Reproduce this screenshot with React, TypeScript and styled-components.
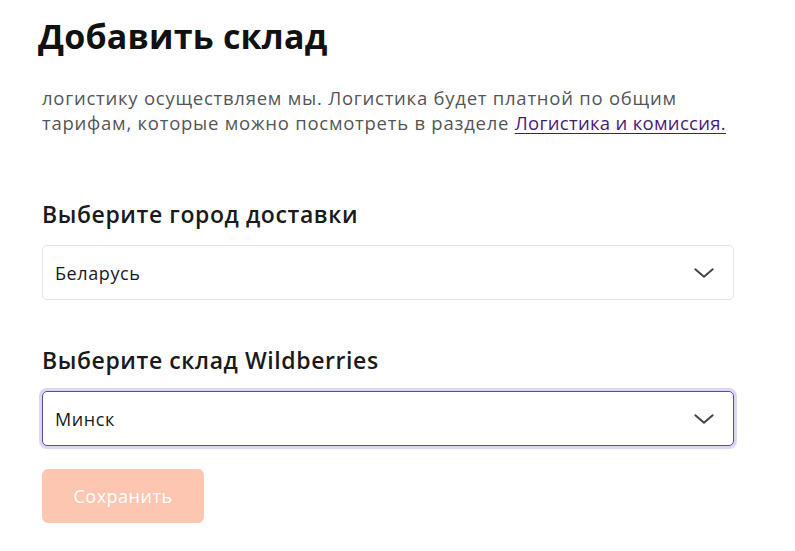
import { createGlobalStyle } from 'styled-components';
import styled from 'styled-components';

const GlobalStyle = createGlobalStyle`
  html, body {
    margin: 0;
    padding: 0;
    background: #ffffff;
  }
  body {
    font-family: 'Open Sans', 'Noto Sans', sans-serif;
    color: #1f1f1f;
  }
`;

const Page = styled.div`
  width: 692px;
  padding: 12px 0 0 42px;
`;

const Title = styled.h1`
  margin: 0 0 0 -4px;
  font-size: 34px;
  line-height: 48px;
  font-weight: 700;
  color: #111111;
  letter-spacing: 0.2px;
`;

const Text = styled.p`
  margin: 25px 0 0;
  font-size: 18.5px;
  line-height: 25px;
  color: #555555;
  letter-spacing: 0.75px;
  white-space: nowrap;
`;

const Link = styled.a`
  color: #481a78;
  letter-spacing: 0.3px;
  text-decoration: underline;
  text-underline-offset: 3px;
`;

const Label = styled.h2<{ $first?: boolean }>`
  margin: ${p => (p.$first ? '64px' : '45px')} 0 0;
  font-size: 23px;
  line-height: 30px;
  font-weight: 600;
  color: #1a1a1a;
  letter-spacing: 0.6px;
`;

const Select = styled.div<{ $active?: boolean }>`
  margin-top: 16px;
  height: 55px;
  box-sizing: border-box;
  display: flex;
  align-items: center;
  justify-content: space-between;
  padding: 0 16px 0 12px;
  border-radius: 5px;
  border: 1px solid ${p => (p.$active ? '#5b4a8c' : '#e4e4e4')};
  box-shadow: ${p => (p.$active ? '0 0 0 3px #ddd5f3' : 'none')};
  font-size: 18px;
  letter-spacing: 0.6px;
  color: #1a1a1a;
`;

const Chevron = styled.svg`
  width: 26px;
  height: 26px;
  color: #444444;
`;

const Button = styled.button`
  margin-top: 23px;
  width: 162px;
  height: 54px;
  border: none;
  border-radius: 6px;
  background: #fcc6b1;
  color: #ffffff;
  font-family: 'Open Sans', 'Noto Sans', sans-serif;
  font-size: 18px;
  letter-spacing: 0.5px;
`;

function ChevronDown() {
  return (
    <Chevron viewBox="0 0 24 24" fill="none" stroke="currentColor" strokeWidth="1.8" strokeLinecap="round" strokeLinejoin="round">
      <path d="M4 8.5l8 7 8-7" />
    </Chevron>
  );
}

function SelectField({ label, value, active, first }: { label: string; value: string; active?: boolean; first?: boolean }) {
  return (
    <>
      <Label $first={first}>{label}</Label>
      <Select $active={active}>
        <span>{value}</span>
        <ChevronDown />
      </Select>
    </>
  );
}

export default function App() {
  return (
    <>
      <GlobalStyle />
      <Page>
        <Title>Добавить склад</Title>
        <Text>
          логистику осуществляем мы. Логистика будет платной по общим
          <br />
          тарифам, которые можно посмотреть в разделе <Link href="#">Логистика и комиссия.</Link>
        </Text>
        <SelectField label="Выберите город доставки" value="Беларусь" first />
        <SelectField label="Выберите склад Wildberries" value="Минск" active />
        <Button>Сохранить</Button>
      </Page>
    </>
  );
}
